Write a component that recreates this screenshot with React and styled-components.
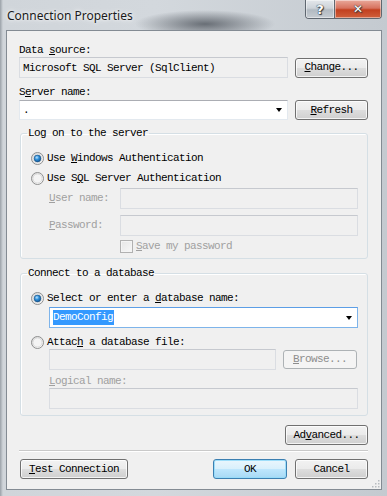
import styled, { createGlobalStyle } from "styled-components";

const GlobalStyle = createGlobalStyle`
  html, body {
    margin: 0;
    padding: 0;
    background: #ffffff;
  }
  * {
    box-sizing: border-box;
  }
`;

const mono = `"Liberation Mono", "DejaVu Sans Mono", monospace`;

const RadioIcon = ({ checked }) => (
  <svg width="13" height="13" viewBox="0 0 13 13">
    <defs>
      <linearGradient id="ring" x1="0" y1="0" x2="1" y2="1">
        <stop offset="0" stopColor="#d8d8d8" />
        <stop offset="1" stopColor="#ffffff" />
      </linearGradient>
      <radialGradient id="dot" cx="0.4" cy="0.35" r="0.7">
        <stop offset="0" stopColor="#b9e3ff" />
        <stop offset="0.45" stopColor="#2f8fd8" />
        <stop offset="1" stopColor="#0b4f8f" />
      </radialGradient>
    </defs>
    <circle cx="6.5" cy="6.5" r="6" fill="url(#ring)" stroke="#8e8f8f" />
    <circle cx="6.5" cy="6.5" r="4.5" fill="#f4f4f4" stroke="#cfcfcf" strokeWidth="0.6" />
    {checked && <circle cx="6.5" cy="6.5" r="3.4" fill="url(#dot)" stroke="#1a4f80" strokeWidth="0.6" />}
  </svg>
);

const Grip = () => (
  <svg width="9" height="9" viewBox="0 0 9 9">
    {[
      [7, 1],
      [7, 4],
      [4, 4],
      [7, 7],
      [4, 7],
      [1, 7],
    ].map(([x, y]) => (
      <rect key={x + "-" + y} x={x} y={y} width="1.5" height="1.5" fill="#b8bcc0" />
    ))}
  </svg>
);

const App = () => {
  return (
    <>
      <GlobalStyle />
      <Window>
        <TitleBar>
          <Title>Connection Properties</Title>
          <CaptionButtons>
            <CaptionButton $kind="help">?</CaptionButton>
            <CaptionButton $kind="close">✕</CaptionButton>
          </CaptionButtons>
        </TitleBar>

        <Client>
          <Label>
            Data <u>s</u>ource:
          </Label>
          <Row $mt={0}>
            <TextBox $w={269} $h={21} $variant="readonly">
              Microsoft SQL Server (SqlClient)
            </TextBox>
            <Button $w={73}>
              <u>C</u>hange...
            </Button>
          </Row>

          <Label $mt={8}>
            S<u>e</u>rver name:
          </Label>
          <Row $mt={1}>
            <TextBox $w={269} $h={20} $variant="white">
              .
              <Arrow />
            </TextBox>
            <Button $w={73}>
              <u>R</u>efresh
            </Button>
          </Row>

          <Group $mt={7}>
            <Legend>Log on to the server</Legend>
            <RadioRow $mt={12}>
              <RadioIcon checked />
              <span>
                Use <u>W</u>indows Authentication
              </span>
            </RadioRow>
            <RadioRow $mt={7}>
              <RadioIcon />
              <span>
                Use S<u>Q</u>L Server Authentication
              </span>
            </RadioRow>
            <FieldRow $mt={3}>
              <FieldLabel>
                <u>U</u>ser name:
              </FieldLabel>
              <TextBox $w={238} $h={21} $variant="disabled" />
            </FieldRow>
            <FieldRow $mt={6}>
              <FieldLabel>
                <u>P</u>assword:
              </FieldLabel>
              <TextBox $w={238} $h={21} $variant="disabled" />
            </FieldRow>
            <CheckRow $mt={4}>
              <CheckBox />
              <span>
                <u>S</u>ave my password
              </span>
            </CheckRow>
          </Group>

          <Group $mt={8} $pb={6}>
            <Legend>Connect to a database</Legend>
            <RadioRow $mt={12}>
              <RadioIcon checked />
              <span>
                Select or enter a <u>d</u>atabase name:
              </span>
            </RadioRow>
            <Indented $mt={2}>
              <TextBox $w={309} $h={21} $variant="focus">
                <Selected>DemoConfig</Selected>
                <Arrow />
              </TextBox>
            </Indented>
            <RadioRow $mt={8}>
              <RadioIcon />
              <span>
                Attac<u>h</u> a database file:
              </span>
            </RadioRow>
            <Indented $mt={0} $gap={7}>
              <TextBox $w={227} $h={21} $variant="disabled" />
              <Button $w={74} $h={19} disabled>
                <u>B</u>rowse...
              </Button>
            </Indented>
            <Label $mt={5} $disabled $indent={18}>
              <u>L</u>ogical name:
            </Label>
            <Indented $mt={0}>
              <TextBox $w={309} $h={21} $variant="disabled" />
            </Indented>
          </Group>

          <RightRow $mt={9}>
            <Button $w={83}>
              Ad<u>v</u>anced...
            </Button>
          </RightRow>

          <Separator />

          <BottomRow>
            <Button $w={108}>
              <u>T</u>est Connection
            </Button>
            <Spacer />
            <Button $w={74} $default>
              OK
            </Button>
            <Button $w={73}>Cancel</Button>
          </BottomRow>

          <GripCorner>
            <Grip />
          </GripCorner>
        </Client>
      </Window>
    </>
  );
};

export default App;

const Window = styled.div`
  width: 387px;
  height: 496px;
  display: flex;
  flex-direction: column;
  background:
    radial-gradient(ellipse 70px 14px at 205px 24px, rgba(70, 76, 84, 0.75), rgba(70, 76, 84, 0) 100%),
    linear-gradient(to right, #9aa1a8 0px, #d0d5da 3px, #d3d8dd 40%, #c4cad0 100%);
  font-family: ${mono};
  font-size: 11px;
  letter-spacing: -0.6px;
  color: #000;
`;

const TitleBar = styled.div`
  height: 30px;
  display: flex;
  align-items: flex-start;
`;

const Title = styled.div`
  margin: 9px 0 0 7px;
  font-family: "Noto Sans", "Open Sans", sans-serif;
  font-size: 12px;
  letter-spacing: 0;
  color: #1b1b1b;
  line-height: 14px;
  text-shadow: 0 0 6px rgba(255, 255, 255, 0.9), 0 0 3px rgba(255, 255, 255, 0.9);
`;

const CaptionButtons = styled.div`
  margin-left: auto;
  margin-right: 5px;
  display: flex;
  border: 1px solid #5f6770;
  border-top: none;
  border-radius: 0 0 4px 4px;
  overflow: hidden;
  height: 19px;
`;

const CaptionButton = styled.div`
  width: ${(p) => (p.$kind === "close" ? 47 : 28)}px;
  height: 18px;
  display: flex;
  align-items: center;
  justify-content: center;
  font-family: "DejaVu Sans", sans-serif;
  font-weight: bold;
  letter-spacing: 0;
  font-size: ${(p) => (p.$kind === "close" ? 12 : 13)}px;
  color: #ffffff;
  text-shadow: 0 0 1px #2a2f36, 0 0 1px #2a2f36, 1px 1px 1px #3a3f46;
  border-left: ${(p) => (p.$kind === "close" ? "1px solid #5f6770" : "none")};
  background: ${(p) =>
    p.$kind === "close"
      ? "linear-gradient(to bottom, #e9a99b 0%, #d7735f 45%, #c2401f 55%, #d0603c 100%)"
      : "linear-gradient(to bottom, #e3e7eb 0%, #cdd3d9 45%, #b2bac2 55%, #c6ccd2 100%)"};
  box-shadow: inset 0 0 0 1px rgba(255, 255, 255, 0.45);
`;

const Client = styled.div`
  position: relative;
  flex: 1;
  margin: 0 5px 6px 6px;
  border: 1px solid #838b93;
  background: #f0f0f0;
  padding: 13px 13px 0 12px;
  display: flex;
  flex-direction: column;
`;

const Label = styled.div`
  line-height: 13px;
  height: 13px;
  margin-top: ${(p) => p.$mt || 0}px;
  margin-left: ${(p) => p.$indent || 0}px;
  color: ${(p) => (p.$disabled ? "#a0a0a0" : "#000")};
  white-space: pre;
`;

const Row = styled.div`
  display: flex;
  align-items: center;
  gap: 7px;
  margin-top: ${(p) => p.$mt}px;
`;

const TextBox = styled.div`
  width: ${(p) => p.$w}px;
  height: ${(p) => p.$h}px;
  display: flex;
  align-items: center;
  padding: 0 4px 0 3px;
  white-space: pre;
  border: 1px solid
    ${(p) =>
      p.$variant === "focus" ? "#7eb4ea" : p.$variant === "white" ? "#e3e9ef" : "#dadde2"};
  border-top-color: ${(p) =>
    p.$variant === "focus" ? "#5c9ee6" : p.$variant === "white" ? "#abadb3" : "#c6c9cf"};
  background: ${(p) => (p.$variant === "white" || p.$variant === "focus" ? "#ffffff" : "#f0f0f0")};
  color: #000;
`;

const Arrow = styled.span`
  margin-left: auto;
  margin-right: 1px;
  width: 0;
  height: 0;
  border-left: 3.5px solid transparent;
  border-right: 3.5px solid transparent;
  border-top: 4px solid #000;
`;

const Selected = styled.span`
  background: #3399ff;
  color: #ffffff;
  padding: 1px 1px 1px 0;
  line-height: 13px;
`;

const Button = styled.button`
  width: ${(p) => p.$w}px;
  height: ${(p) => p.$h || 20}px;
  padding: 0;
  margin: 0;
  font: inherit;
  letter-spacing: inherit;
  color: ${(p) => (p.disabled ? "#8d8d8d" : "#000")};
  border-radius: 3px;
  border: 1px solid ${(p) => (p.$default ? "#3c7fb1" : p.disabled ? "#adb2b5" : "#707070")};
  background: ${(p) =>
    p.$default
      ? "linear-gradient(to bottom, #eaf6fd 0%, #d9f0fc 48%, #bee6fd 52%, #a7d9f5 100%)"
      : p.disabled
      ? "#f4f4f4"
      : "linear-gradient(to bottom, #f2f2f2 0%, #ebebeb 48%, #dddddd 52%, #cfcfcf 100%)"};
  box-shadow: inset 0 0 0 1px
    ${(p) => (p.$default ? "rgba(150, 220, 250, 0.9)" : p.disabled ? "#f4f4f4" : "rgba(255,255,255,0.75)")};
  white-space: pre;
  line-height: 13px;
`;

const Group = styled.fieldset`
  margin: ${(p) => p.$mt}px 0 0 1px;
  width: 348px;
  min-width: 0;
  padding: 0 9px ${(p) => p.$pb || 5}px 10px;
  border: 1px solid #d5dfe5;
  border-radius: 3px;
  box-shadow: inset 1px 1px 0 #ffffff;
  display: flex;
  flex-direction: column;
`;

const Legend = styled.legend`
  margin-left: -4px;
  padding: 0 1px;
  line-height: 13px;
  white-space: pre;
`;

const RadioRow = styled.div`
  display: flex;
  align-items: center;
  gap: 3px;
  height: 13px;
  line-height: 13px;
  margin-top: ${(p) => p.$mt}px;
  white-space: pre;

  svg {
    flex: none;
  }
`;

const FieldRow = styled.div`
  display: flex;
  align-items: center;
  margin-top: ${(p) => p.$mt}px;
  padding-left: 18px;
`;

const FieldLabel = styled.div`
  width: 71px;
  color: #a0a0a0;
  white-space: pre;
  line-height: 13px;
`;

const CheckRow = styled.div`
  display: flex;
  align-items: center;
  gap: 3px;
  margin-top: ${(p) => p.$mt}px;
  padding-left: 89px;
  color: #a0a0a0;
  white-space: pre;
  line-height: 13px;
`;

const CheckBox = styled.span`
  width: 13px;
  height: 13px;
  border: 1px solid #b1b1b1;
  background: linear-gradient(135deg, #e6e6e6 0%, #f7f7f7 100%);
  box-shadow: inset 0 0 0 1px #f4f4f4;
`;

const Indented = styled.div`
  display: flex;
  align-items: center;
  gap: ${(p) => p.$gap || 0}px;
  margin-top: ${(p) => p.$mt}px;
  padding-left: 18px;
`;

const RightRow = styled.div`
  display: flex;
  justify-content: flex-end;
  margin-top: ${(p) => p.$mt}px;
`;

const Separator = styled.div`
  margin-top: 5px;
  height: 1px;
  background: #d5d5d5;
  border-bottom: 1px solid #ffffff;
  height: 2px;
  background-clip: content-box;
  background-color: transparent;
  border-top: 1px solid #c9c9c9;
`;

const BottomRow = styled.div`
  display: flex;
  align-items: center;
  gap: 8px;
  margin-top: 7px;
  padding-left: 1px;
`;

const Spacer = styled.div`
  flex: 1;
`;

const GripCorner = styled.div`
  position: absolute;
  right: 1px;
  bottom: 1px;
  line-height: 0;
`;
